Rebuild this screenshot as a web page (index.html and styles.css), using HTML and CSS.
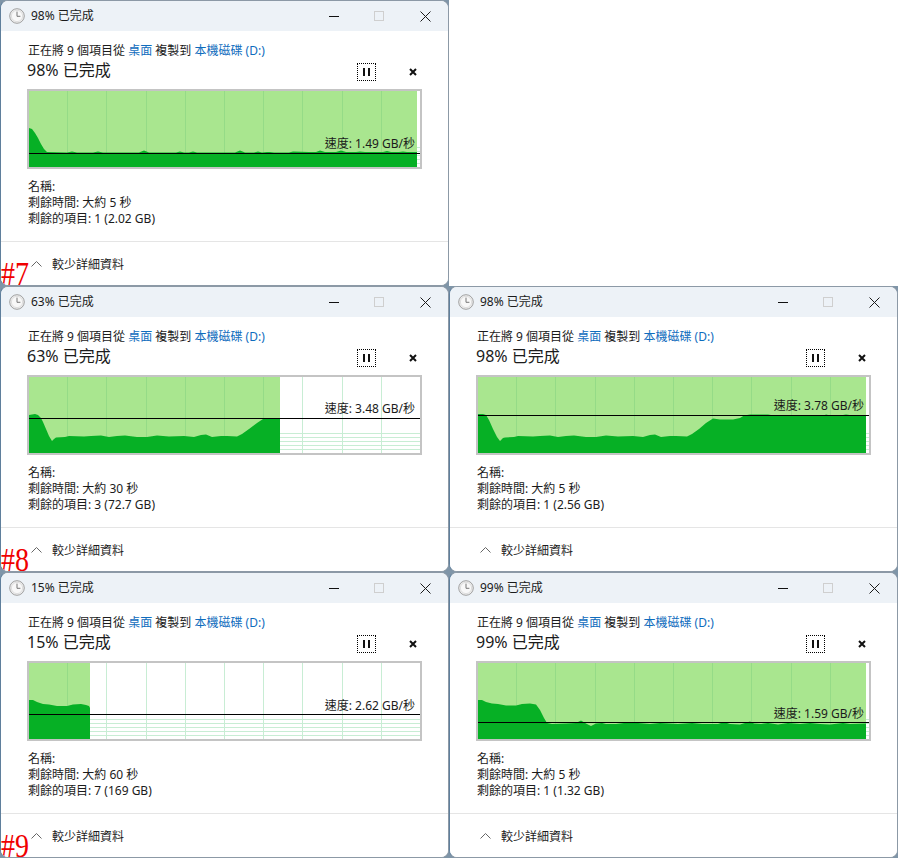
FILE: index.html
```html
<!DOCTYPE html>
<html lang="zh-Hant">
<head>
<meta charset="utf-8">
<title>複製進度</title>
<link rel="stylesheet" href="styles.css">
</head>
<body>
<svg class="defs" width="0" height="0" aria-hidden="true">
  <defs>
    <symbol id="clock" viewBox="0 0 16 16">
      <circle cx="8" cy="8" r="7.3" fill="#eeeeee" stroke="#a0a0a0"/>
      <circle cx="8" cy="8" r="5.6" fill="#f8f8f8" stroke="#d0d0d0" stroke-width=".6"/>
      <path d="M8 3.6V8.3H11.4" fill="none" stroke="#777" stroke-width="1"/>
    </symbol>
    <symbol id="vgrid" viewBox="0 0 391 76" width="391" height="76">
      <path d="M38.5 0V76M77.5 0V76M117.5 0V76M156.5 0V76M195.5 0V76M234.5 0V76M273.5 0V76M313.5 0V76M352.5 0V76" fill="none"/>
    </symbol>
    <symbol id="hgrid" viewBox="0 0 391 76" width="391" height="76">
      <path d="M0 56.5H391M0 60.5H391M0 64.5H391M0 68.5H391M0 72.5H391" fill="none"/>
    </symbol>
  </defs>
</svg>

<main class="desktop">

  <section class="window">
    <header class="titlebar">
      <svg class="clock"><use href="#clock"/></svg>
      <span class="title">98% 已完成</span>
      <span class="controls"><i class="minimize"></i><i class="maximize"></i><svg class="close" viewBox="0 0 11 11"><path d="M.5.5l10 10M10.5.5l-10 10"/></svg></span>
    </header>
    <div class="body">
      <p class="route">正在將 9 個項目從 <a>桌面</a> 複製到 <a>本機磁碟 (D:)</a></p>
      <div class="status">
        <span class="percent">98% 已完成</span>
        <span class="pause"><i></i><i></i></span>
        <svg class="cancel" viewBox="0 0 8 8"><path d="M1 1l6 6M7 1l-6 6"/></svg>
      </div>
      <div class="graph">
        <svg class="chart" width="391" height="76" viewBox="0 0 391 76">
          <use class="pale" href="#hgrid"/><use class="pale" href="#vgrid"/>
          <svg width="388" height="76"><rect class="done" width="388" height="76"/><use class="deep" href="#vgrid"/></svg>
          <path class="flow" d="M0 37L3 38L6 42L9 47L12 53L15 58L18 61L38 61.5L43 60.5L48 61.5L64 61.5L69 60.5L74 61.5L110 61.5L115 59.5L120 61.5L147 61.5L151 60.5L155 61.5L160 61.5L164 60.5L168 61.5L206 61.5L211 59.5L216 61.5L225 61.5L229 60.5L233 61.5L238 61L241 61L245 61.5L260 61.5L264 60.5L280 61L287 61L291 59.5L296 61L307 61L312 59.5L317 61L327 61L331 60.5L336 61L354 61L358 60L362 61L370 61L374 60.5L378 61L388 61V76H0Z"/>
          <rect class="line" y="62" width="391" height="1"/>
        </svg>
        <span class="speed" style="top:45px">速度: 1.49 GB/秒</span>
      </div>
      <dl class="details">
        <div>名稱:</div>
        <div>剩餘時間: 大約 5 秒</div>
        <div>剩餘的項目: 1 (2.02 GB)</div>
      </dl>
    </div>
    <footer class="footer">
      <svg class="chevron" viewBox="0 0 11 6"><path d="M.5 5.5L5.5.5l5 5"/></svg>
      <span>較少詳細資料</span>
    </footer>
    <b class="tag">#7</b>
  </section>

  <div class="blank"></div>

  <section class="window">
    <header class="titlebar">
      <svg class="clock"><use href="#clock"/></svg>
      <span class="title">63% 已完成</span>
      <span class="controls"><i class="minimize"></i><i class="maximize"></i><svg class="close" viewBox="0 0 11 11"><path d="M.5.5l10 10M10.5.5l-10 10"/></svg></span>
    </header>
    <div class="body">
      <p class="route">正在將 9 個項目從 <a>桌面</a> 複製到 <a>本機磁碟 (D:)</a></p>
      <div class="status">
        <span class="percent">63% 已完成</span>
        <span class="pause"><i></i><i></i></span>
        <svg class="cancel" viewBox="0 0 8 8"><path d="M1 1l6 6M7 1l-6 6"/></svg>
      </div>
      <div class="graph">
        <svg class="chart" width="391" height="76" viewBox="0 0 391 76">
          <use class="pale" href="#hgrid"/><use class="pale" href="#vgrid"/>
          <svg width="251" height="76"><rect class="done" width="251" height="76"/><use class="deep" href="#vgrid"/></svg>
          <path class="flow" d="M0 38L3 37.5L6 37L9 38L12 41L14 45L17 52L20 59L23 64L25 62L27 60.5L36 60L40 59L55 59.5L62 59L72 58.5L80 60L88 59L96 58.5L108 60L118 60L128 58.5L140 59.5L155 59L165 60L172 58L177 57.5L183 60L192 59L198 59L208 59.5L213 57L220 52L228 46L234 42L240 41.5L251 41.5V76H0Z"/>
          <rect class="line" y="41" width="391" height="1"/>
        </svg>
        <span class="speed" style="top:24px">速度: 3.48 GB/秒</span>
      </div>
      <dl class="details">
        <div>名稱:</div>
        <div>剩餘時間: 大約 30 秒</div>
        <div>剩餘的項目: 3 (72.7 GB)</div>
      </dl>
    </div>
    <footer class="footer">
      <svg class="chevron" viewBox="0 0 11 6"><path d="M.5 5.5L5.5.5l5 5"/></svg>
      <span>較少詳細資料</span>
    </footer>
    <b class="tag">#8</b>
  </section>

  <section class="window">
    <header class="titlebar">
      <svg class="clock"><use href="#clock"/></svg>
      <span class="title">98% 已完成</span>
      <span class="controls"><i class="minimize"></i><i class="maximize"></i><svg class="close" viewBox="0 0 11 11"><path d="M.5.5l10 10M10.5.5l-10 10"/></svg></span>
    </header>
    <div class="body">
      <p class="route">正在將 9 個項目從 <a>桌面</a> 複製到 <a>本機磁碟 (D:)</a></p>
      <div class="status">
        <span class="percent">98% 已完成</span>
        <span class="pause"><i></i><i></i></span>
        <svg class="cancel" viewBox="0 0 8 8"><path d="M1 1l6 6M7 1l-6 6"/></svg>
      </div>
      <div class="graph">
        <svg class="chart" width="391" height="76" viewBox="0 0 391 76">
          <use class="pale" href="#hgrid"/><use class="pale" href="#vgrid"/>
          <svg width="388" height="76"><rect class="done" width="388" height="76"/><use class="deep" href="#vgrid"/></svg>
          <path class="flow" d="M0 37L5 37L8 38L11 43L15 52L19 60L22 64L25 61L27 60.5L36 60L40 59L55 59.5L62 59L72 58.5L80 60L88 59L96 58.5L108 60L118 60L128 58.5L140 59.5L155 59L165 60L172 58L177 57.5L183 60L192 59L198 59L209 59.5L214 57L221 52L228 46L235 41.5L242 42.5L255 42.5L262 41L266 38.5L272 37.5L290 37.5L296 38.5L310 38.5L318 38L330 38L346 38.5L348 37.5L352 38.5L362 38.5L368 37.5L375 38.5L388 38.5V76H0Z"/>
          <rect class="line" y="38" width="391" height="1"/>
        </svg>
        <span class="speed" style="top:21px">速度: 3.78 GB/秒</span>
      </div>
      <dl class="details">
        <div>名稱:</div>
        <div>剩餘時間: 大約 5 秒</div>
        <div>剩餘的項目: 1 (2.56 GB)</div>
      </dl>
    </div>
    <footer class="footer">
      <svg class="chevron" viewBox="0 0 11 6"><path d="M.5 5.5L5.5.5l5 5"/></svg>
      <span>較少詳細資料</span>
    </footer>
  </section>

  <section class="window">
    <header class="titlebar">
      <svg class="clock"><use href="#clock"/></svg>
      <span class="title">15% 已完成</span>
      <span class="controls"><i class="minimize"></i><i class="maximize"></i><svg class="close" viewBox="0 0 11 11"><path d="M.5.5l10 10M10.5.5l-10 10"/></svg></span>
    </header>
    <div class="body">
      <p class="route">正在將 9 個項目從 <a>桌面</a> 複製到 <a>本機磁碟 (D:)</a></p>
      <div class="status">
        <span class="percent">15% 已完成</span>
        <span class="pause"><i></i><i></i></span>
        <svg class="cancel" viewBox="0 0 8 8"><path d="M1 1l6 6M7 1l-6 6"/></svg>
      </div>
      <div class="graph">
        <svg class="chart" width="391" height="76" viewBox="0 0 391 76">
          <use class="pale" href="#hgrid"/><use class="pale" href="#vgrid"/>
          <svg width="61" height="76"><rect class="done" width="61" height="76"/><use class="deep" href="#vgrid"/></svg>
          <path class="flow" d="M0 37L4 37L8 39L14 41L20 41.5L28 43L38 43L44 41.5L52 41L57 42L60 43L61 45V76H0Z"/>
          <rect class="line" y="51" width="391" height="1"/>
        </svg>
        <span class="speed" style="top:35px">速度: 2.62 GB/秒</span>
      </div>
      <dl class="details">
        <div>名稱:</div>
        <div>剩餘時間: 大約 60 秒</div>
        <div>剩餘的項目: 7 (169 GB)</div>
      </dl>
    </div>
    <footer class="footer">
      <svg class="chevron" viewBox="0 0 11 6"><path d="M.5 5.5L5.5.5l5 5"/></svg>
      <span>較少詳細資料</span>
    </footer>
    <b class="tag">#9</b>
  </section>

  <section class="window">
    <header class="titlebar">
      <svg class="clock"><use href="#clock"/></svg>
      <span class="title">99% 已完成</span>
      <span class="controls"><i class="minimize"></i><i class="maximize"></i><svg class="close" viewBox="0 0 11 11"><path d="M.5.5l10 10M10.5.5l-10 10"/></svg></span>
    </header>
    <div class="body">
      <p class="route">正在將 9 個項目從 <a>桌面</a> 複製到 <a>本機磁碟 (D:)</a></p>
      <div class="status">
        <span class="percent">99% 已完成</span>
        <span class="pause"><i></i><i></i></span>
        <svg class="cancel" viewBox="0 0 8 8"><path d="M1 1l6 6M7 1l-6 6"/></svg>
      </div>
      <div class="graph">
        <svg class="chart" width="391" height="76" viewBox="0 0 391 76">
          <use class="pale" href="#hgrid"/><use class="pale" href="#vgrid"/>
          <svg width="388" height="76"><rect class="done" width="388" height="76"/><use class="deep" href="#vgrid"/></svg>
          <path class="flow" d="M0 37L4 37L8 39L14 40.5L20 41L28 42.5L38 42.5L44 41L52 40.5L58 41.5L62 47L66 55L69 60L74 61L88 60.5L98 60L103 57.5L108 60.5L113 63L118 60.5L124 60L128 61L138 61L146 60L160 60L172 61L182 60L200 61L214 60L224 61L240 61L246 59L252 61L262 61.5L272 58.5L276 60.5L283 61L290 60L300 61.5L310 60L322 61L332 60L342 61L352 61.5L365 60L372 61L388 60.5V76H0Z"/>
          <rect class="line" y="59" width="391" height="1"/>
        </svg>
        <span class="speed" style="top:43px">速度: 1.59 GB/秒</span>
      </div>
      <dl class="details">
        <div>名稱:</div>
        <div>剩餘時間: 大約 5 秒</div>
        <div>剩餘的項目: 1 (1.32 GB)</div>
      </dl>
    </div>
    <footer class="footer">
      <svg class="chevron" viewBox="0 0 11 6"><path d="M.5 5.5L5.5.5l5 5"/></svg>
      <span>較少詳細資料</span>
    </footer>
  </section>

</main>
</body>
</html>
```

FILE: styles.css
```css
* { box-sizing: border-box; }

html, body { margin: 0; background: #fff; }

body {
  width: 898px;
  height: 858px;
  overflow: hidden;
  font-family: "Noto Sans", "Noto Sans CJK TC", sans-serif;
  font-size: 12px;
  color: #1b1b1b;
}

.defs { position: absolute; }

.desktop {
  display: grid;
  grid-template-columns: 449px 449px;
  grid-auto-rows: 286px;
  background: #7f95a8;
}

.blank { background: #fff; }

.window {
  position: relative;
  display: flex;
  flex-direction: column;
  overflow: hidden;
  background: #fff;
  border: 1px solid #8c99a6;
  border-left-color: #5f7f9c;
  border-radius: 8px;
}

.titlebar {
  display: flex;
  align-items: center;
  flex: 0 0 30px;
  padding-left: 8px;
  background: #edf2f7;
}

.clock { width: 16px; height: 16px; margin-right: 6px; }

.title { line-height: 30px; }

.controls {
  display: flex;
  align-items: center;
  margin-left: auto;
  padding-right: 17px;
}

.minimize { width: 10px; height: 1px; background: #111; margin-right: 35px; }

.maximize { width: 10px; height: 10px; border: 1px solid #cfcfcf; margin-right: 36px; }

.close { width: 11px; height: 11px; fill: none; stroke: #1a1a1a; stroke-width: 1; }

.body { flex: 1; padding: 11px 0 0 27px; }

.route { margin: 0; height: 17px; line-height: 18px; }

.route a { color: #0f6cbd; }

.status {
  display: flex;
  align-items: center;
  height: 22px;
  margin: 0 0 8px -1px;
}

.percent { font-size: 16px; line-height: 22px; }

.pause {
  display: flex;
  align-items: center;
  justify-content: center;
  gap: 3px;
  width: 19px;
  height: 18px;
  margin: 3px 0 0 auto;
  border: 1px dotted #000;
}

.pause i { width: 2px; height: 8px; background: #111; }

.cancel {
  width: 8px;
  height: 8px;
  margin: 3px 31px 0 33px;
  fill: none;
  stroke: #111;
  stroke-width: 2;
}

.graph {
  position: relative;
  width: 395px;
  height: 80px;
  margin-left: -1px;
  border: 2px solid #c4c4c4;
}

.chart { display: block; }

.pale { stroke: #c8edd4; }
.deep { stroke: #95db87; }
.done { fill: #a9e68f; }
.flow { fill: #06b025; }
.line { fill: #000; }

.speed {
  position: absolute;
  right: 5px;
  line-height: 16px;
}

.details { margin: 10px 0 0; line-height: 16px; }

.footer {
  display: flex;
  align-items: center;
  flex: 0 0 44px;
  padding-left: 30px;
  border-top: 1px solid #e5e5e5;
  background: #fff;
}

.chevron {
  width: 11px;
  height: 6px;
  margin-right: 10px;
  fill: none;
  stroke: #666;
  stroke-width: 1;
}

.tag {
  position: absolute;
  left: 0;
  bottom: 0;
  font: 400 33px/22px "Liberation Serif", serif;
  color: #f00000;
  transform: scaleX(.85);
  transform-origin: left;
}
```
